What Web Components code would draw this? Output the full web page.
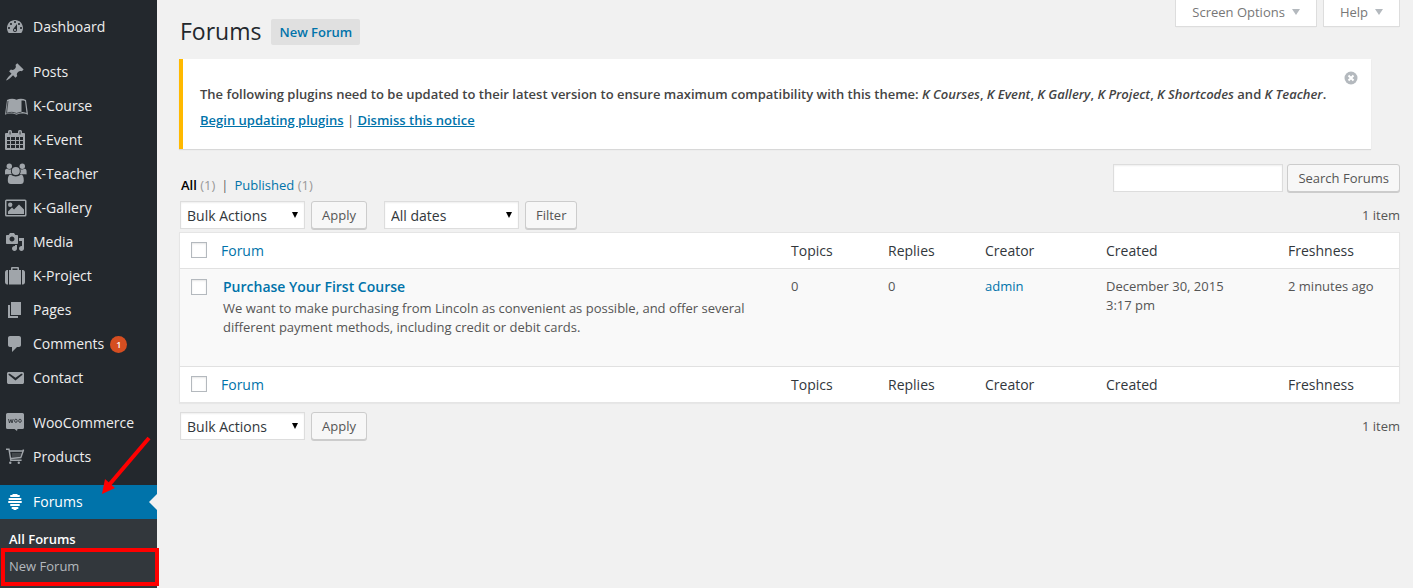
<!DOCTYPE html>
<html lang="en">
<head>
<meta charset="utf-8">
<meta name="viewport" content="width=device-width, initial-scale=1">
<title>Forums</title>
<style>
  body { margin: 0; background: #f1f1f1; color: #444; font: 13px/19px "Open Sans", sans-serif; }
</style>
</head>
<body>
<admin-shell>
  <admin-menu slot="menu">
    <menu-item icon="dashboard" label="Dashboard"></menu-item>
    <menu-gap></menu-gap>
    <menu-item icon="pin" label="Posts"></menu-item>
    <menu-item icon="book" label="K-Course"></menu-item>
    <menu-item icon="calendar" label="K-Event"></menu-item>
    <menu-item icon="users" label="K-Teacher"></menu-item>
    <menu-item icon="picture" label="K-Gallery"></menu-item>
    <menu-item icon="media" label="Media"></menu-item>
    <menu-item icon="suitcase" label="K-Project"></menu-item>
    <menu-item icon="pages" label="Pages"></menu-item>
    <menu-item icon="comment" label="Comments"><count-badge>1</count-badge></menu-item>
    <menu-item icon="email" label="Contact"></menu-item>
    <menu-gap></menu-gap>
    <menu-item icon="woo" label="WooCommerce"></menu-item>
    <menu-item icon="cart" label="Products"></menu-item>
    <menu-gap></menu-gap>
    <menu-item icon="forums" label="Forums" current><pointer-arrow></pointer-arrow></menu-item>
    <sub-menu>
      <sub-item current>All Forums</sub-item>
      <sub-item marked>New Forum</sub-item>
    </sub-menu>
  </admin-menu>

  <page-header>
    Forums
    <title-action slot="action">New Forum</title-action>
    <screen-tab slot="tabs">Screen Options</screen-tab>
    <screen-tab slot="tabs">Help</screen-tab>
  </page-header>
  <plugin-notice></plugin-notice>
  <filter-row></filter-row>
  <table-nav dates></table-nav>
  <forum-table></forum-table>
  <table-nav></table-nav>
</admin-shell>

<script>
const define = (name, html, setup) => {
  const template = document.createElement('template');
  template.innerHTML = html;
  customElements.define(name, class extends HTMLElement {
    constructor() {
      super();
      this.attachShadow({ mode: 'open' }).append(template.content.cloneNode(true));
    }
    connectedCallback() { if (setup) setup(this, this.shadowRoot); }
  });
};

/* Dashicon-style glyphs use a 20px grid; the others are drawn in the 33x34 menu cell. */
const dash = d => `<path transform="translate(5 7)" d="${d}"/>`;
const ICONS = {
  dashboard: dash('M3.76 16h12.48c1.1-1.37 1.76-3.11 1.76-5 0-4.42-3.58-8-8-8s-8 3.58-8 8c0 1.89.66 3.63 1.76 5zM10 4c.55 0 1 .45 1 1s-.45 1-1 1-1-.45-1-1 .45-1 1-1zM6 6c.55 0 1 .45 1 1s-.45 1-1 1-1-.45-1-1 .45-1 1-1zm8 0c.55 0 1 .45 1 1s-.45 1-1 1-1-.45-1-1 .45-1 1-1zm-5.37 5.55L12 7v6c0 1.1-.9 2-2 2s-2-.9-2-2c0-.57.24-1.08.63-1.45zM4 10c.55 0 1 .45 1 1s-.45 1-1 1-1-.45-1-1 .45-1 1-1zm12 0c.55 0 1 .45 1 1s-.45 1-1 1-1-.45-1-1 .45-1 1-1zm-5 3c0-.55-.45-1-1-1s-1 .45-1 1 .45 1 1 1 1-.45 1-1z'),
  pin: dash('M10.44 3.02l1.82-1.82 6.36 6.35-1.83 1.82c-1.05-.68-2.48-.57-3.41.36l-.75.75c-.92.93-1.04 2.35-.35 3.41l-1.83 1.82-2.41-2.41-2.8 2.79c-.42.42-3.38 2.71-3.8 2.29s1.86-3.39 2.28-3.81l2.79-2.79L4.1 9.36l1.83-1.82c1.05.69 2.48.57 3.4-.36l.75-.75c.93-.92 1.05-2.35.36-3.41z'),
  book: '<path fill-rule="evenodd" d="M7 11C10 9.400 14 9.400 16.500 10.800c2.500-1.400 6.500-1.400 9.500.2L28 25.800c-3-1.600-8.500-1.600-11.500-.1-3-1.500-8.500-1.500-11.500.1zM21.500 11.500V23c1.600 0 3.200.3 5 1.100L25 12c-1-.4-2.200-.5-3.500-.5z"/><path d="M8 12 6.500 24.300c3.300-1.400 7.200-1.300 10 .1 1.600-.8 3.300-1.100 5-1.100" fill="none" stroke="#23282d" stroke-width=".7"/>',
  calendar: '<path fill-rule="evenodd" d="M6 10h2V8.500a1.500 1.500 0 0 1 1.500-1.500h1A1.500 1.500 0 0 1 12 8.500V10h6V8.500A1.500 1.500 0 0 1 19.500 7h1A1.500 1.500 0 0 1 22 8.500V10h2a1 1 0 0 1 1 1v15a1 1 0 0 1-1 1H6a1 1 0 0 1-1-1V11a1 1 0 0 1 1-1zM9.600 8.500v3h.9v-3zM19.600 8.500v3h.9v-3zM7 14v3h3v-3zm4 0v3h4v-3zm5 0v3h3v-3zm4 0v3h3v-3zM7 18v3h3v-3zm4 0v3h4v-3zm5 0v3h3v-3zm4 0v3h3v-3zM7 22v3h3v-3zm4 0v3h4v-3zm5 0v3h3v-3zm4 0v3h3v-3z"/>',
  users: '<circle cx="9.300" cy="9.300" r="2.700"/><circle cx="22.300" cy="9.300" r="2.700"/><path d="M5 17v-2.500c0-2 1-3 2-2.700 1.500.9 3 .9 4.300.4-.8 2-.4 3.600.7 5H7c-1 0-2 .6-2-.2zM26.600 17v-2.500c0-2-1-3-2-2.700-1.500.9-3 .9-4.300.4.8 2 .4 3.600-.7 5h5c1 0 2 .6 2-.2z"/><circle cx="15.800" cy="14" r="4"/><path d="M10.500 17.600c-1.800.4-2.700 2.500-2.700 5.800 0 2.300 1.200 3.600 3 3.600h10c1.800 0 3-1.300 3-3.600 0-3.300-.9-5.400-2.700-5.800-3.300 2.500-7.300 2.500-10.600 0z"/>',
  picture: '<path fill-rule="evenodd" d="M6.500 8.500h18.500a1.500 1.500 0 0 1 1.500 1.500v14a1.500 1.500 0 0 1-1.500 1.500H6.500A1.500 1.500 0 0 1 5 24V10a1.500 1.500 0 0 1 1.500-1.500zM6.500 10v14H25V10z"/><circle cx="10.200" cy="13.700" r="2.200"/><path d="M8 23v-2.500l4-4 2 2 5-5 5 5V23z"/>',
  media: dash('M13 11V4c0-.55-.45-1-1-1h-1.670L9 1H5L3.670 3H2c-.55 0-1 .45-1 1v7c0 .55.45 1 1 1h10c.55 0 1-.45 1-1zM7 4.500c1.380 0 2.500 1.120 2.500 2.500S8.380 9.500 7 9.500 4.500 8.380 4.500 7 5.620 4.500 7 4.500zM14 6h5v10.500c0 1.380-1.120 2.500-2.500 2.500S14 17.880 14 16.500s1.120-2.500 2.500-2.500c.17 0 .34.02.5.05V9h-3V6zm-4 8.050V13h2v3.500c0 1.380-1.120 2.500-2.500 2.500S7 17.880 7 16.500 8.120 14 9.500 14c.17 0 .34.02.5.05z'),
  suitcase: '<path d="M5 13.500C5 12 6 11 7 11h1v14.500H7c-1 0-2-1-2-2.500zM9 11h2V9.300C11 8.500 11.500 8 12.300 8h5.400c.8 0 1.300.5 1.300 1.300V11h2v14.500H9zm3.500 0h5V9.500h-5zM22 11h1c1 0 2 1 2 2.500V23c0 1.500-1 2.500-2 2.500h-1z"/>',
  pages: dash('M6 15V2h10v13H6zm-1 1h8v2H3V5h2v11z'),
  comment: dash('M5 2h9c1.100 0 2 .9 2 2v7c0 1.100-.9 2-2 2h-2l-5 5v-5H5c-1.100 0-2-.9-2-2V4c0-1.100.9-2 2-2z'),
  email: dash('M3.870 4h13.250C18.370 4 19 4.590 19 5.790v8.420c0 1.190-.63 1.790-1.880 1.790H3.870c-1.250 0-1.880-.6-1.880-1.790V5.790c0-1.200.63-1.790 1.880-1.790zm6.620 8.600l6.740-5.530c.24-.2.43-.66.13-1.070-.29-.41-.82-.42-1.170-.17l-5.700 3.860L4.800 5.830c-.35-.25-.88-.24-1.170.17-.3.41-.11.87.13 1.070z'),
  woo: '<path d="M7.500 7h15A1.500 1.500 0 0 1 24 8.500v13a1.500 1.500 0 0 1-1.500 1.500h-5l-.5 2-2.500-2h-7A1.500 1.500 0 0 1 6 21.500v-13A1.500 1.500 0 0 1 7.500 7z"/><path d="M8.500 13l1 4 1.500-3.500 1 3.500 1.200-4" fill="none" stroke="#23282d" stroke-width=".8"/><ellipse cx="15.900" cy="14.800" rx="1.300" ry="1.600" fill="none" stroke="#23282d" stroke-width=".8"/><ellipse cx="20" cy="14.800" rx="1.300" ry="1.600" fill="none" stroke="#23282d" stroke-width=".8"/>',
  cart: '<path d="M6 9.200h3l1.800 11h10.800M9.300 11h13.900l-2.400 6.500-10.400 1M23 11l.5-1.500" fill="none" stroke="currentColor" stroke-width="1.400"/><path d="M12 14h9.500M12 16h8.500" stroke="currentColor" stroke-width=".5"/><circle cx="10.300" cy="22.800" r="1.200"/><circle cx="18.800" cy="22.800" r="1.200"/>',
  forums: '<path d="M13 9h4l1 1h1a1 1 0 0 1 0 2h-8a1 1 0 0 1 0-2h1zM9.500 13h11a1 1 0 0 1 0 2h-11a1 1 0 0 1 0-2zM9 16h12a1 1 0 0 1 0 2H9a1 1 0 0 1 0-2zM11 19h8a1 1 0 0 1 0 2h-8a1 1 0 0 1 0-2zM12.500 22h5a1 1 0 0 1 0 2H17l-1 1h-2l-1-1h-.5a1 1 0 0 1 0-2z"/>'
};

define('admin-shell', `
<style>
  :host { display: grid; grid-template-columns: 157px minmax(0, 1fr); min-height: 100vh; }
  main { padding: 0 13px 16px 22px; }
</style>
<slot name="menu"></slot><main><slot></slot></main>`);

define('admin-menu', `
<style>
  :host { display: block; background: #23282d; }
  nav { padding-top: 10px; }
</style>
<nav aria-label="Main menu"><slot></slot></nav>`);

define('menu-gap', `<style>:host { display: block; height: 11px; }</style>`);

define('menu-item', `
<style>
  :host { display: block; position: relative; }
  a { display: flex; align-items: center; height: 34px; color: #eee; font-size: 14px; line-height: 18px; text-decoration: none; }
  svg { flex: none; width: 33px; height: 34px; color: #a0a5aa; fill: currentColor; }
  :host([current]) a { background: #0073aa; color: #fff; }
  :host([current]) svg { color: #fff; }
  :host([current]) a::after { content: ""; margin-left: auto; border: 8px solid transparent; border-left: 0; border-right-color: #f1f1f1; }
</style>
<a href="#"><svg viewBox="0 0 33 34" aria-hidden="true"></svg><span></span><slot></slot></a>`,
(host, root) => {
  root.querySelector('svg').innerHTML = ICONS[host.getAttribute('icon')];
  root.querySelector('span').textContent = host.getAttribute('label');
});

define('count-badge', `
<style>
  :host { display: block; margin-left: 6px; min-width: 17px; border-radius: 9px; background: #d54e21; color: #fff; font-size: 9px; font-weight: 600; line-height: 17px; text-align: center; }
</style><slot></slot>`);

define('pointer-arrow', `
<style>
  :host { position: absolute; left: 100px; bottom: 24px; width: 52px; height: 60px; pointer-events: none; }
  svg { display: block; }
</style>
<svg width="52" height="60" viewBox="0 0 52 60" aria-hidden="true"><path d="M49 3 9 50" stroke="#f00" stroke-width="4"/><path d="M2 59 15 53 5 44z" fill="#f00"/></svg>`);

define('sub-menu', `
<style>:host { display: block; padding: 7px 0 8px; background: #32373c; }</style><slot></slot>`);

define('sub-item', `
<style>
  :host { display: block; position: relative; }
  a { display: block; padding: 0 9px; color: #b4b9be; line-height: 27px; text-decoration: none; }
  :host([current]) a { color: #fff; font-weight: 600; }
  :host([marked])::after { content: ""; position: absolute; inset: -5px -2px -6px 1px; border: 4px solid #f00; pointer-events: none; }
</style><a href="#"><slot></slot></a>`);

define('page-header', `
<style>
  :host { display: flex; justify-content: space-between; align-items: flex-start; margin-bottom: 14px; }
  .title { display: flex; align-items: flex-end; gap: 10px; padding: 19px 0 0 1px; height: 26px; }
  h1 { margin: 0; color: #23282d; font-size: 23px; font-weight: 400; line-height: 28px; }
  .tabs { display: flex; gap: 6px; }
</style>
<div class="title"><h1><slot></slot></h1><slot name="action"></slot></div>
<div class="tabs"><slot name="tabs"></slot></div>`);

define('title-action', `
<style>
  a { display: block; padding: 0 8px; border-radius: 2px; background: #e0e0e0; color: #0073aa; font-weight: 600; line-height: 26px; text-decoration: none; }
</style><a href="#"><slot></slot></a>`);

define('screen-tab', `
<style>
  button { display: flex; align-items: center; gap: 7px; height: 27px; padding: 0 16px 2px; border: 1px solid #ddd; border-top: 0; background: #fff; box-shadow: 0 1px 1px -1px rgba(0,0,0,.1); color: #777; font: inherit; }
  svg { fill: #b4b9be; }
</style>
<button type="button"><slot></slot><svg width="8" height="6" aria-hidden="true"><path d="M0 0h8L4 6z"/></svg></button>`);

define('plugin-notice', `
<style>
  :host { display: flex; justify-content: space-between; align-items: flex-start; margin-right: 29px; padding: 12px 13px 16px 17px; border-left: 4px solid #ffb900; background: #fff; box-shadow: 0 1px 1px rgba(0,0,0,.1); font-weight: 600; }
  p { margin: 0; line-height: 26px; }
  .text { padding-top: 10px; }
  a { color: #0073aa; }
  span { font-weight: 400; }
  button { flex: none; display: block; margin: 0; padding: 0; border: 0; background: none; }
  svg { display: block; }
</style>
<div class="text">
<p>The following plugins need to be updated to their latest version to ensure maximum compatibility with this theme: <em>K Courses</em>, <em>K Event</em>, <em>K Gallery</em>, <em>K Project</em>, <em>K Shortcodes</em> and <em>K Teacher</em>.</p>
<p><a href="#">Begin updating plugins</a> <span>|</span> <a href="#">Dismiss this notice</a></p>
</div>
<button type="button" aria-label="Dismiss"><svg width="14" height="14" viewBox="0 0 14 14" aria-hidden="true"><circle cx="7" cy="7" r="6.500" fill="#b4b9be"/><path d="M4.500 4.500l5 5m0-5l-5 5" stroke="#fff" stroke-width="2"/></svg></button>`);

const BUTTON = `
  button { height: 28px; padding: 0 10px; border: 1px solid #ccc; border-radius: 3px; background: #f7f7f7; box-shadow: 0 1px 0 #ccc; color: #555; font: inherit; line-height: 26px; }`;

define('filter-row', `
<style>${BUTTON}
  :host { display: flex; justify-content: space-between; align-items: flex-end; margin-top: 15px; }
  ul { display: flex; gap: 6px; margin: 0; padding: 0 0 0 2px; color: #666; line-height: 14px; list-style: none; }
  a { color: #0073aa; text-decoration: none; }
  a.current { color: #000; font-weight: 600; }
  .count { color: #999; }
  form { display: flex; gap: 4px; }
  input { box-sizing: border-box; width: 170px; height: 28px; margin: 0; padding: 3px 5px; border: 1px solid #ddd; border-radius: 0; box-shadow: inset 0 1px 2px rgba(0,0,0,.07); font: inherit; }
</style>
<ul>
  <li><a href="#" class="current">All</a> <span class="count">(1)</span></li>
  <li>|</li>
  <li><a href="#">Published</a> <span class="count">(1)</span></li>
</ul>
<form role="search" onsubmit="return false"><input type="search" aria-label="Search Forums"><button>Search Forums</button></form>`);

define('table-nav', `
<style>${BUTTON}
  :host { display: flex; align-items: center; gap: 17px; margin-top: 9px; padding: 0 0 3px 1px; }
  div { display: flex; gap: 6px; }
  .dates { display: none; }
  :host([dates]) .dates { display: flex; }
  select { appearance: none; box-sizing: border-box; height: 28px; margin: 0; padding: 2px 6px 0; border: 1px solid #ddd; border-radius: 0; box-shadow: inset 0 1px 2px rgba(0,0,0,.07); color: #32373c; font: inherit; font-size: 14px; line-height: 24px;
    background: #fff url("data:image/svg+xml,%3Csvg xmlns='http://www.w3.org/2000/svg' width='6' height='6'%3E%3Cpath d='M0 0h6L3 6z'/%3E%3C/svg%3E") no-repeat right 6px top 10px; }
  .actions select { width: 125px; }
  .dates select { width: 135px; }
  output { margin-left: auto; color: #555; }
</style>
<div class="actions"><select aria-label="Bulk action"><option>Bulk Actions</option></select><button type="button">Apply</button></div>
<div class="dates"><select aria-label="Filter by date"><option>All dates</option></select><button type="button">Filter</button></div>
<output>1 item</output>`);

const headings = `<td class="check"><input type="checkbox" aria-label="Select all"></td>
  <th scope="col"><a href="#">Forum</a></th><th scope="col">Topics</th><th scope="col">Replies</th>
  <th scope="col">Creator</th><th scope="col">Created</th><th scope="col">Freshness</th>`;

define('forum-table', `
<style>
  :host { display: block; }
  table { width: 100%; table-layout: fixed; border: 1px solid #e5e5e5; border-spacing: 0; background: #fff; box-shadow: 0 1px 1px rgba(0,0,0,.04); color: #555; }
  .check-col { width: 31px; }
  .small { width: 97px; }
  .medium { width: 121px; }
  .wide { width: 182px; }
  th, td { padding: 8px 10px; text-align: left; vertical-align: top; }
  th { color: #32373c; font-size: 14px; font-weight: 400; line-height: 19px; }
  thead th, thead td { border-bottom: 1px solid #e1e1e1; }
  tfoot th, tfoot td { border-top: 1px solid #e1e1e1; }
  tbody { background: #f9f9f9; }
  tbody td { padding-bottom: 29px; }
  td.name { padding-left: 12px; }
  td.check { padding: 9px 0 0 11px; }
  tbody td.check { padding-top: 10px; }
  a { color: #0073aa; text-decoration: none; }
  .name a { display: block; font-size: 14px; font-weight: 600; line-height: 20px; }
  .name p { margin: 2px 0 0; }
  input { appearance: none; box-sizing: border-box; display: block; width: 16px; height: 16px; margin: 0; border: 1px solid #b4b9be; background: #fff; box-shadow: inset 0 1px 2px rgba(0,0,0,.1); }
</style>
<table>
  <colgroup><col class="check-col"><col><col class="small"><col class="small"><col class="medium"><col class="wide"><col class="medium"></colgroup>
  <thead><tr>${headings}</tr></thead>
  <tbody><tr>
    <td class="check"><input type="checkbox" aria-label="Select Purchase Your First Course"></td>
    <td class="name"><a href="#">Purchase Your First Course</a><p>We want to make purchasing from Lincoln as convenient as possible, and offer several different payment methods, including credit or debit cards.</p></td>
    <td>0</td><td>0</td><td><a href="#">admin</a></td><td>December 30, 2015<br>3:17 pm</td><td>2 minutes ago</td>
  </tr></tbody>
  <tfoot><tr>${headings}</tr></tfoot>
</table>`);
</script>
</body>
</html>
